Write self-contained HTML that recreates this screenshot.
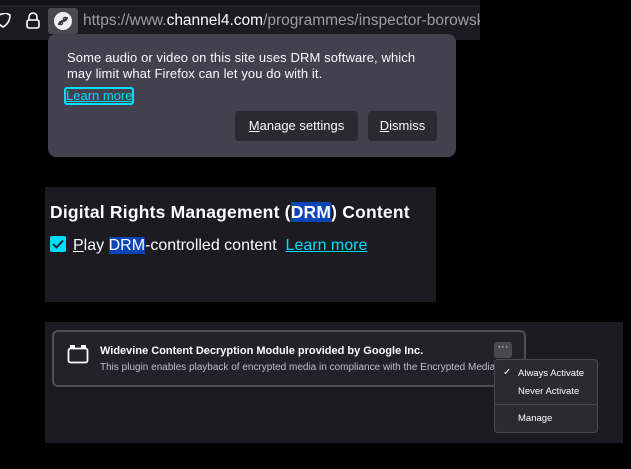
<!DOCTYPE html>
<html><head><style>
body{margin:0;width:631px;height:469px;background:#000;position:relative;overflow:hidden;font-family:"Liberation Sans",sans-serif;}
.a{position:absolute;}
</style></head><body>
<div class="a" style="left:0;top:0;width:480px;height:40px;background:#1c1b22;"></div>
<div class="a" style="left:0;top:0;width:480px;height:5px;background:#141318;"></div>
<div class="a" style="left:0;top:6px;width:480px;height:1px;background:#2b2a33;"></div>
<svg class="a" style="left:0;top:13px" width="14" height="16"><path d="M-2 2 L6 0 L10 2 Q10 10 3 14 Q-4 10 -4 2" fill="none" stroke="#fbfbfe" stroke-width="1.6"/></svg>
<svg class="a" style="left:25px;top:12px" width="16" height="18"><path d="M4 8 V5 A4 4 0 0 1 12 5 V8" fill="none" stroke="#fbfbfe" stroke-width="1.6"/><rect x="2" y="8" width="12" height="8" rx="2" fill="none" stroke="#fbfbfe" stroke-width="1.6"/></svg>
<div class="a" style="left:48px;top:8px;width:30px;height:26px;background:#4a4951;border-radius:3px;"></div>
<svg class="a" style="left:53px;top:11px" width="20" height="20"><circle cx="10" cy="10" r="9" fill="#f0f0f4"/><path d="M6 13 L9 10 M11 10 L14 7" stroke="#333" stroke-width="2.2" stroke-linecap="round"/><circle cx="8" cy="12" r="1.6" fill="none" stroke="#333" stroke-width="1.3"/><circle cx="12" cy="8" r="1.6" fill="none" stroke="#333" stroke-width="1.3"/></svg>
<div class="a" style="left:83px;top:12px;font-size:15.5px;color:#9e9ea6;white-space:nowrap;width:397px;overflow:hidden;">https://www.<span style="color:#fbfbfe">channel4.com</span>/programmes/inspector-borowski</div>

<div class="a" style="left:48px;top:34px;width:408px;height:123px;background:#42414d;border-radius:8px;"></div>
<div class="a" style="left:67px;top:50px;font-size:13px;line-height:16px;color:#fbfbfe;letter-spacing:0.1px;">Some audio or video on this site uses DRM software, which<br>may limit what Firefox can let you do with it.</div>
<div class="a" style="left:64px;top:87px;width:66px;height:14px;border:2px solid #00ddff;border-radius:3px;"></div>
<div class="a" style="left:66px;top:88px;font-size:13px;color:#00ddff;text-decoration:underline;">Learn more</div>
<div class="a" style="left:235px;top:111px;width:123px;height:30px;background:#2b2a33;border-radius:4px;color:#fbfbfe;font-size:13px;line-height:30px;text-align:center;"><u>M</u>anage settings</div>
<div class="a" style="left:368px;top:111px;width:69px;height:30px;background:#2b2a33;border-radius:4px;color:#fbfbfe;font-size:13px;line-height:30px;text-align:center;"><u>D</u>ismiss</div>

<div class="a" style="left:45px;top:187px;width:391px;height:115px;background:#1c1b22;"></div>
<div class="a" style="left:50px;top:202px;font-size:17.5px;font-weight:bold;color:#fbfbfe;letter-spacing:0.2px;">Digital Rights Management (<span style="background:#0a45b5">DRM</span>) Content</div>
<div class="a" style="left:50px;top:236px;width:16px;height:16px;background:#00ddff;border-radius:2px;"></div>
<svg class="a" style="left:50px;top:236px" width="16" height="16"><path d="M3 8 L6.5 11.5 L13 4.5" fill="none" stroke="#1c1b22" stroke-width="1.8"/></svg>
<div class="a" style="left:73px;top:237px;font-size:16px;color:#fbfbfe;white-space:nowrap;"><u>P</u>lay <span style="background:#0a45b5">DRM</span>-controlled content&nbsp; <span style="color:#00ddff;text-decoration:underline">Learn more</span></div>

<div class="a" style="left:45px;top:322px;width:578px;height:121px;background:#1c1b22;"></div>
<div class="a" style="left:52px;top:330px;width:470px;height:53px;border:2px solid #4f4e56;border-radius:6px;background:#23222b;"></div>
<svg class="a" style="left:67px;top:344px" width="22" height="20"><rect x="1.5" y="4.5" width="19" height="14" rx="2" fill="none" stroke="#fbfbfe" stroke-width="1.8"/><rect x="3" y="1" width="5" height="4" fill="#fbfbfe"/><rect x="14" y="1" width="5" height="4" fill="#fbfbfe"/></svg>
<div class="a" style="left:100px;top:345px;font-size:11px;font-weight:bold;color:#fbfbfe;white-space:nowrap;">Widevine Content Decryption Module provided by Google Inc.</div>
<div class="a" style="left:100px;top:362px;font-size:10px;color:#bfbfc9;white-space:nowrap;width:394px;overflow:hidden;">This plugin enables playback of encrypted media in compliance with the Encrypted Media Extensions</div>
<div class="a" style="left:494px;top:342px;width:18px;height:16px;background:#4a4951;border-radius:3px;color:#fbfbfe;font-size:11px;line-height:11px;text-align:center;">···</div>
<div class="a" style="left:494px;top:359px;width:102px;height:72px;background:#2b2a33;border:1px solid #4a4951;border-radius:4px;"></div>
<div class="a" style="left:503px;top:367px;font-size:10px;color:#fbfbfe;">✓</div>
<div class="a" style="left:518px;top:368px;font-size:9.5px;color:#fbfbfe;">Always Activate</div>
<div class="a" style="left:518px;top:386px;font-size:9.5px;color:#fbfbfe;">Never Activate</div>
<div class="a" style="left:495px;top:404px;width:102px;height:1px;background:#4a4951;"></div>
<div class="a" style="left:518px;top:413px;font-size:9.5px;color:#fbfbfe;">Manage</div>
</body></html>
